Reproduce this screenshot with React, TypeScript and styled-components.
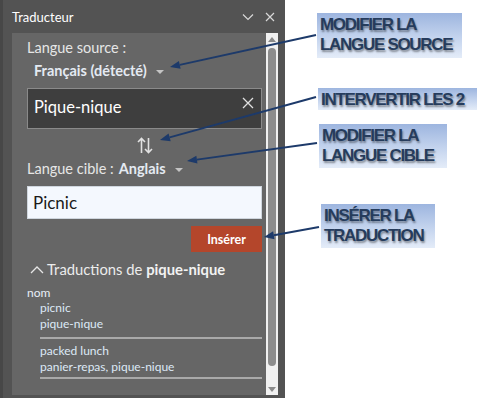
import React from "react";
import styled, { createGlobalStyle } from "styled-components";

const GlobalStyle = createGlobalStyle`
  html, body { margin: 0; padding: 0; background: #ffffff; }
  body { width: 480px; height: 398px; overflow: hidden; font-family: Lato, "Noto Sans", sans-serif; }
`;

const Page = styled.div`
  position: relative;
  display: flex;
  width: 480px;
  height: 398px;
`;

const Pane = styled.div`
  width: 282px;
  height: 398px;
  background: #535353;
  border-left: 3px solid #474747;
  display: flex;
  flex-direction: column;
`;

const Header = styled.div`
  height: 33px;
  display: flex;
  align-items: center;
  justify-content: space-between;
  padding: 0 10px 0 9px;
  color: #ffffff;
  font-size: 13px;
  flex: none;
`;

const HeaderIcons = styled.div`
  display: flex;
  gap: 11px;
  align-items: center;
`;

const Body = styled.div`
  flex: 1;
  display: flex;
  padding: 0 7px 3px 9px;
  min-height: 0;
`;

const Content = styled.div`
  flex: 1;
  background: #666666;
  padding: 0 4px 0 15px;
  display: flex;
  flex-direction: column;
  color: #e6e6e6;
`;

const Label = styled.div<{ $top?: number }>`
  font-size: 14.5px;
  line-height: 18px;
  margin-top: ${(p) => p.$top ?? 0}px;
  display: flex;
  align-items: center;
  gap: 5px;
`;

const Strong = styled.span`
  font-weight: 700;
  color: #e4eaf2;
`;

const Dropdown = styled.div`
  font-size: 14.5px;
  line-height: 18px;
  margin: 5px 0 0 7px;
  display: flex;
  align-items: center;
  gap: 9px;
`;

const Caret = styled.span`
  width: 0;
  height: 0;
  border-left: 4px solid transparent;
  border-right: 4px solid transparent;
  border-top: 4px solid #c4c4c4;
  margin-top: 2px;
`;

const SourceBox = styled.div`
  margin-top: 8px;
  height: 41px;
  background: #3e3e3e;
  border: 1px solid #8a8a8a;
  box-sizing: border-box;
  display: flex;
  align-items: flex-start;
  justify-content: space-between;
  padding: 6px 7px 0 6px;
  color: #ffffff;
  font-size: 16.5px;
  line-height: 24px;
`;

const SwapRow = styled.div`
  display: flex;
  justify-content: center;
  margin-top: 8px;
  height: 17px;
`;

const TargetBox = styled.div`
  margin-top: 8px;
  height: 33px;
  background: #f4f8fe;
  border: 1px solid #cfd6de;
  box-sizing: border-box;
  display: flex;
  align-items: center;
  padding: 0 5px;
  color: #1a1a1a;
  font-size: 17px;
`;

const ButtonRow = styled.div`
  display: flex;
  justify-content: flex-end;
  margin-top: 7px;
`;

const InsertButton = styled.button`
  width: 71px;
  height: 26px;
  background: #b4462b;
  border: none;
  color: #ffffff;
  font-family: Lato, "Noto Sans", sans-serif;
  font-weight: 700;
  font-size: 12.5px;
  padding: 0;
`;

const SectionTitle = styled.div`
  margin-top: 7px;
  margin-left: 3px;
  font-size: 14.8px;
  line-height: 20px;
  display: flex;
  align-items: center;
  gap: 3px;
  color: #ececec;
  b { font-weight: 700; color: #f2f2f2; }
`;

const Pos = styled.div`
  margin-top: 6px;
  font-size: 12px;
  line-height: 15px;
  color: #e8eef6;
`;

const Group = styled.div`
  margin-left: 13px;
  padding: 0 0 5px;
  border-bottom: 2px solid #a9a9a9;
  display: flex;
  flex-direction: column;
  & + & { padding-top: 4px; padding-bottom: 2px; }
`;

const Item = styled.div`
  font-size: 12px;
  line-height: 16px;
  color: #dde9f6;
`;

const Scrollbar = styled.div`
  width: 12px;
  background: #f0f0f0;
  display: flex;
  flex-direction: column;
  align-items: center;
  padding: 4px 0 3px;
  box-sizing: border-box;
`;

const Arrow = styled.span<{ $down?: boolean }>`
  width: 0;
  height: 0;
  border-left: 4px solid transparent;
  border-right: 4px solid transparent;
  ${(p) => (p.$down ? "border-top: 5px solid #8a8a8a;" : "border-bottom: 5px solid #8a8a8a;")}
`;

const Thumb = styled.div`
  width: 8px;
  flex: 1;
  margin: 6px 0 21px;
  background: #8c8c8c;
  border-radius: 4px;
`;

const Annotations = styled.div`
  position: relative;
  flex: 1;
`;

const Callout = styled.div<{ $x: number; $y: number; $w: number; $h: number }>`
  position: absolute;
  left: ${(p) => p.$x}px;
  top: ${(p) => p.$y}px;
  width: ${(p) => p.$w}px;
  height: ${(p) => p.$h}px;
  box-sizing: border-box;
  padding: 2px 0 0 3px;
  background: linear-gradient(180deg, #9db5df 0%, #c4d4ee 55%, #e4ecf8 100%);
  font-family: "Liberation Sans", Arial, sans-serif;
  font-weight: 700;
  font-size: 17px;
  line-height: 20px;
  letter-spacing: -1.3px;
  color: #263c5c;
  text-shadow: 1px 2px 2px rgba(0, 0, 0, 0.4);
  white-space: nowrap;
`;

const Overlay = styled.svg`
  position: absolute;
  left: 0;
  top: 0;
  pointer-events: none;
`;

const arrows = [
  { x1: 316, y1: 35, x2: 170, y2: 67 },
  { x1: 316, y1: 97, x2: 160, y2: 140 },
  { x1: 317, y1: 143, x2: 187, y2: 161 },
  { x1: 319, y1: 227, x2: 264, y2: 237 },
];

function ArrowLine({ x1, y1, x2, y2 }: { x1: number; y1: number; x2: number; y2: number }) {
  const ang = Math.atan2(y2 - y1, x2 - x1);
  const len = 10;
  const wid = 4;
  const bx = x2 - len * Math.cos(ang);
  const by = y2 - len * Math.sin(ang);
  const px = -Math.sin(ang) * wid;
  const py = Math.cos(ang) * wid;
  return (
    <g>
      <line x1={x1} y1={y1} x2={bx} y2={by} stroke="#1d3a6a" strokeWidth={2} />
      <polygon points={`${x2},${y2} ${bx + px},${by + py} ${bx - px},${by - py}`} fill="#1d3a6a" />
    </g>
  );
}

export default function App() {
  return (
    <>
      <GlobalStyle />
      <Page>
        <Pane>
          <Header>
            <span>Traducteur</span>
            <HeaderIcons>
              <svg width="12" height="8" viewBox="0 0 12 8">
                <path d="M1 1.5 L6 6.5 L11 1.5" fill="none" stroke="#d8d8d8" strokeWidth="1.2" />
              </svg>
              <svg width="10" height="10" viewBox="0 0 10 10">
                <path d="M1 1 L9 9 M9 1 L1 9" fill="none" stroke="#d8d8d8" strokeWidth="1.2" />
              </svg>
            </HeaderIcons>
          </Header>
          <Body>
            <Content>
              <Label $top={6}>Langue source :</Label>
              <Dropdown>
                <Strong>Français (détecté)</Strong>
                <Caret />
              </Dropdown>
              <SourceBox>
                <span>Pique-nique</span>
                <svg width="12" height="12" viewBox="0 0 12 12" style={{ marginTop: 2 }}>
                  <path d="M1 1 L11 11 M11 1 L1 11" fill="none" stroke="#e0e0e0" strokeWidth="1.3" />
                </svg>
              </SourceBox>
              <SwapRow>
                <svg width="16" height="17" viewBox="0 0 16 17">
                  <path d="M4.5 16 V1.5 M1 5 L4.5 1.5 L8 5" fill="none" stroke="#e2e2e2" strokeWidth="1.6" />
                  <path d="M11.5 1 V15.5 M8 12 L11.5 15.5 L15 12" fill="none" stroke="#e2e2e2" strokeWidth="1.6" />
                </svg>
              </SwapRow>
              <Label $top={6}>
                <span>Langue cible :</span>
                <Strong>Anglais</Strong>
                <Caret style={{ marginLeft: 4 }} />
              </Label>
              <TargetBox>Picnic</TargetBox>
              <ButtonRow>
                <InsertButton>Insérer</InsertButton>
              </ButtonRow>
              <SectionTitle>
                <svg width="14" height="9" viewBox="0 0 14 9">
                  <path d="M1 8 L7 2 L13 8" fill="none" stroke="#e6e6e6" strokeWidth="1.3" />
                </svg>
                <span>
                  Traductions de <b>pique-nique</b>
                </span>
              </SectionTitle>
              <Pos>nom</Pos>
              <Group>
                <Item>picnic</Item>
                <Item>pique-nique</Item>
              </Group>
              <Group>
                <Item>packed lunch</Item>
                <Item>panier-repas, pique-nique</Item>
              </Group>
            </Content>
            <Scrollbar>
              <Arrow />
              <Thumb />
              <Arrow $down />
            </Scrollbar>
          </Body>
        </Pane>
        <Annotations>
          <Callout $x={32} $y={13} $w={145} $h={45}>
            MODIFIER LA
            <br />
            LANGUE SOURCE
          </Callout>
          <Callout $x={33} $y={88} $w={159} $h={22}>
            INTERVERTIR LES 2
          </Callout>
          <Callout $x={34} $y={124} $w={128} $h={44}>
            MODIFIER LA
            <br />
            LANGUE CIBLE
          </Callout>
          <Callout $x={36} $y={204} $w={114} $h={44}>
            INSÉRER LA
            <br />
            TRADUCTION
          </Callout>
        </Annotations>
        <Overlay width={480} height={398} viewBox="0 0 480 398">
          {arrows.map((a, i) => (
            <ArrowLine key={i} {...a} />
          ))}
        </Overlay>
      </Page>
    </>
  );
}
